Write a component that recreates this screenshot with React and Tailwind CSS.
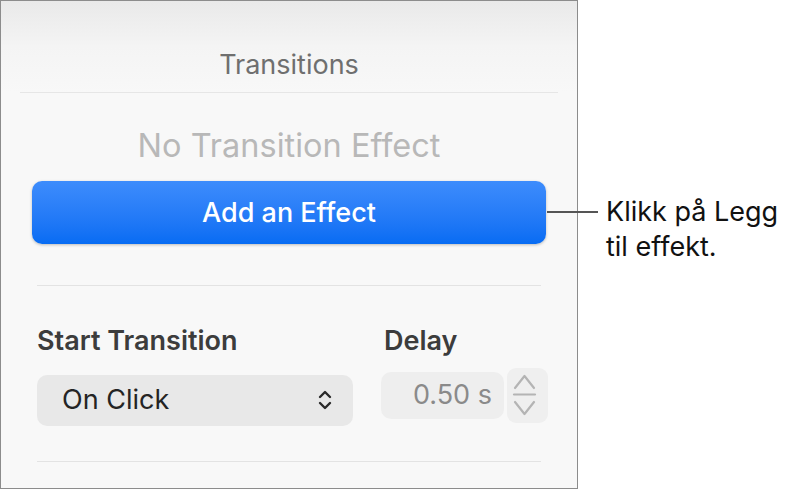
import React from 'react';

const font = { fontFamily: 'Inter, "Noto Sans", sans-serif' };

const Divider = ({ className }) => <div className={`h-px bg-[#e3e3e3] ${className}`} />;

const UpDown = () => (
  <svg width="14" height="22" viewBox="0 0 14 22" fill="none" stroke="#2a2a2a" strokeWidth="2.4" strokeLinecap="round" strokeLinejoin="round">
    <path d="M2 8 L7 3 L12 8" />
    <path d="M2 14 L7 19 L12 14" />
  </svg>
);

const Stepper = () => (
  <div className="w-[41px] h-[55px] rounded-[9px] bg-[#efefef]">
    <svg width="41" height="55" viewBox="0 0 41 55" fill="none" stroke="#b4b4b4" strokeWidth="2.2" strokeLinecap="round" strokeLinejoin="round">
      <path d="M8 20 L17.5 8 L27 20" />
      <path d="M7 26.5 H28" />
      <path d="M8 34 L17.5 46 L27 34" />
    </svg>
  </div>
);

export default function App() {
  return (
    <div className="w-[795px] h-[489px] bg-white flex overflow-hidden" style={font}>
      <div className="w-[578px] h-[489px] shrink-0 border border-[#8c8c8c] bg-[#f8f8f8] flex flex-col">
        <div className="h-[91px] flex flex-col items-center justify-end pb-[14px] bg-gradient-to-b from-[#e9e9e9] via-[#f4f4f4] to-[#f8f8f8]">
          <div className="text-[27px] leading-none text-[#6f6f6f]">Transitions</div>
        </div>
        <Divider className="mx-[19px] bg-[#e6e6e6]" />
        <div className="pt-[37px] text-center text-[32.5px] leading-none text-[#b8b8b8]">No Transition Effect</div>
        <div className="px-[31px] pt-[18px]">
          <button className="w-full h-[63px] rounded-[10px] bg-gradient-to-b from-[#3d8cfc] to-[#066cf3] shadow-[0_1px_3px_rgba(0,0,0,0.25)] text-white text-[27px] font-medium leading-none">
            Add an Effect
          </button>
        </div>
        <Divider className="mx-[36px] mt-[41px]" />
        <div className="flex pl-[36px] pt-[41px]">
          <div className="w-[316px] shrink-0">
            <div className="text-[27px] leading-none font-semibold text-[#3c3c3c]">Start Transition</div>
            <div className="mt-[21px] h-[51px] rounded-[10px] bg-[#e8e8e8] flex items-center justify-between pl-[25px] pr-[21px]">
              <span className="text-[27px] text-[#242424]">On Click</span>
              <UpDown />
            </div>
          </div>
          <div className="ml-[28px] shrink-0">
            <div className="pl-[3px] text-[27px] leading-none font-semibold text-[#3c3c3c]">Delay</div>
            <div className="mt-[14px] flex items-start gap-[3px]">
              <div className="mt-[4px] w-[123px] h-[47px] rounded-[10px] bg-[#eeeeee] flex items-center justify-end pr-[12px] text-[27px] text-[#8a8a8a]">
                0.50 s
              </div>
              <Stepper />
            </div>
          </div>
        </div>
        <Divider className="mx-[36px] mt-[35px]" />
      </div>
      <div className="flex items-start pt-[194px]">
        <div className="-ml-[31px] mt-[17px] w-[51px] h-[1.5px] bg-[#555]" />
        <div className="ml-[8px] text-[27px] leading-[35px] text-[#111]">
          Klikk på Legg
          <br />
          til effekt.
        </div>
      </div>
    </div>
  );
}
